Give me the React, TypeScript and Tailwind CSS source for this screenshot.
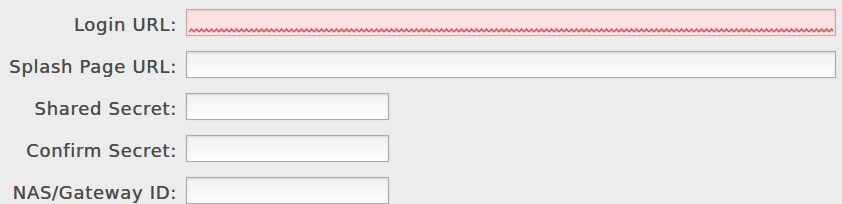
import React from 'react';

const fields = [
  { label: 'Login URL:', wide: true, error: true },
  { label: 'Splash Page URL:', wide: true },
  { label: 'Shared Secret:' },
  { label: 'Confirm Secret:' },
  { label: 'NAS/Gateway ID:' },
];

const Squiggle: React.FC = () => (
  <svg className="absolute left-[2px] bottom-[2px] h-[5px] w-[calc(100%-4px)]" preserveAspectRatio="none">
    <defs>
      <pattern id="sq" width="5" height="5" patternUnits="userSpaceOnUse">
        <path d="M0 4 L2.5 1 L5 4" fill="none" stroke="#cf5a64" strokeWidth="1.6" />
      </pattern>
    </defs>
    <rect width="100%" height="5" fill="url(#sq)" />
  </svg>
);

export default function App() {
  return (
    <div className="w-[842px] h-[204px] overflow-hidden bg-[#ececec] pt-[9px] font-['DejaVu_Sans',Verdana,sans-serif]">
      <div className="flex flex-col gap-[15px]">
        {fields.map((f) => (
          <div key={f.label} className="flex items-center gap-[9px]">
            <label className="w-[177px] pt-[5px] whitespace-nowrap text-right text-[18px] leading-none text-[#4a4a4a] tracking-[0.7px] [text-shadow:0_0_0.6px_#555]">
              {f.label}
            </label>
            <div
              className={`relative h-[27px] ${f.wide ? 'w-[650px]' : 'w-[203px]'} border ${
                f.error
                  ? 'border-[#d9a2a7] bg-[#fde2e4]'
                  : 'border-[#ababab] bg-gradient-to-b from-[#f1f1f4] to-[#fdfdfd]'
              } shadow-[inset_0_1px_2px_rgba(0,0,0,0.12),0_0_1px_rgba(0,0,0,0.15)]`}
            >
              {f.error && <Squiggle />}
            </div>
          </div>
        ))}
      </div>
    </div>
  );
}
